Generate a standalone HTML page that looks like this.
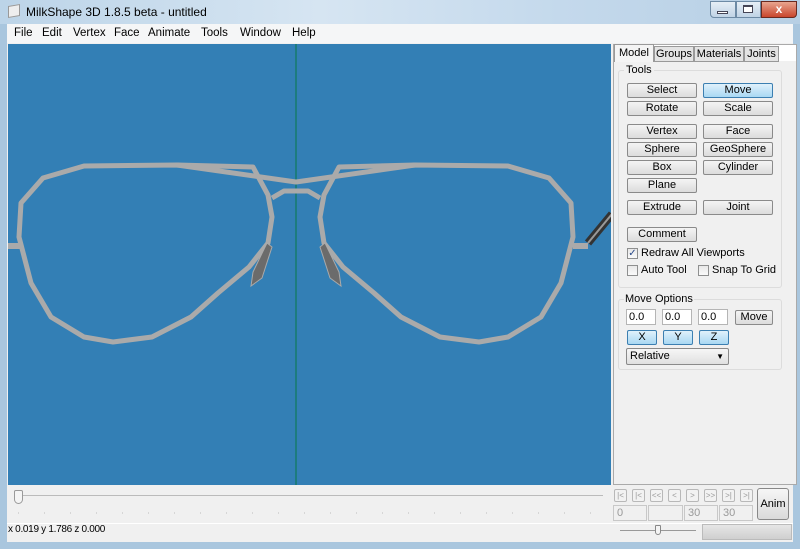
<!DOCTYPE html>
<html><head><meta charset="utf-8"><style>
*{margin:0;padding:0;box-sizing:border-box}
body{width:800px;height:549px;overflow:hidden;background:#a9c6de;font-family:"Liberation Sans",sans-serif;font-size:11px;color:#000;position:relative}
.a{position:absolute}
.btn{position:absolute;height:15px;border:1px solid #8a8a8a;border-radius:2px;background:linear-gradient(#f4f4f4,#dcdcdc);text-align:center;font-size:11px;line-height:13px}
.btn.b{background:linear-gradient(#e0f1fb,#a9d8f3);border-color:#3c7fb1}
.inp{position:absolute;height:16px;background:#fff;border:1px solid #b5b5b5;font-size:11px;line-height:14px;padding-left:2px}
.cb{position:absolute;width:11px;height:11px;border:1px solid #8e8f8f;background:linear-gradient(#e8e8e8,#fafafa)}
.nb{position:absolute;top:489px;width:13px;height:13px;border:1px solid #b8b8b8;border-radius:2px;background:#f2f2f2;font-size:8px;color:#999;text-align:center;line-height:11px}
.nf{position:absolute;top:505px;height:16px;border:1px solid #c8c8c8;background:#f0f0f0;color:#999;font-size:11px;line-height:14px;padding-left:3px}
</style></head><body>
<div class="a" style="left:0;top:0;width:800px;height:24px;background:linear-gradient(90deg,#bcd4e8,#d6e5f2 40%,#c4d9ec 70%,#b7cfe4)"></div>
<div class="a" style="left:8px;top:5px;width:12px;height:12px;background:#eee;border:1px solid #999;transform:skewY(-10deg)"></div>
<div class="a" style="left:26px;top:5px;font-size:12px">MilkShape 3D 1.8.5 beta - untitled</div>
<div class="a" style="left:710px;top:1px;width:26px;height:17px;border:1px solid #6d8aa5;border-radius:0 0 0 4px;background:linear-gradient(#e5eef6,#c0d3e5)"></div>
<div class="a" style="left:717px;top:11px;width:11px;height:3px;background:#fff;border:1px solid #445"></div>
<div class="a" style="left:736px;top:1px;width:25px;height:17px;border:1px solid #6d8aa5;background:linear-gradient(#e5eef6,#c0d3e5)"></div>
<div class="a" style="left:743px;top:5px;width:10px;height:8px;border:1px solid #445;border-top-width:2px;background:#fff"></div>
<div class="a" style="left:761px;top:1px;width:36px;height:17px;border:1px solid #6a2a20;border-radius:0 0 4px 0;background:linear-gradient(#e8a58f,#c9462d);color:#fff;font-weight:bold;text-align:center;line-height:15px;font-size:12px">x</div>
<div class="a" style="left:7px;top:24px;width:786px;height:518px;background:#f0f0f0"></div>
<div class="a" style="left:7px;top:24px;width:786px;height:19px;background:#f5f6f7;font-size:11.5px;line-height:19px">
<span class="a" style="left:7px">File</span><span class="a" style="left:35px">Edit</span><span class="a" style="left:66px">Vertex</span><span class="a" style="left:107px">Face</span><span class="a" style="left:141px">Animate</span><span class="a" style="left:194px">Tools</span><span class="a" style="left:233px">Window</span><span class="a" style="left:285px">Help</span></div>
<div class="a" style="left:8px;top:44px;width:603px;height:441px;background:#337fb5;overflow:hidden">
<svg width="603" height="441" viewBox="8 44 603 441" style="position:absolute;left:0;top:0">
<line x1="296" y1="44" x2="296" y2="485" stroke="#0f7a5a" stroke-width="1.2"/>
<g fill="none" stroke="#aaaaaa" stroke-width="5" stroke-linejoin="round">
<polygon points="84,166 177,165 253,167 268,195 272,217 268,243 249,267 218,293 191,317 152,337 113,342 84,337 51,317 31,283 19,237 21,203 43,178"/>
<polygon points="508,166 415,165 339,167 324,195 320,217 324,243 343,267 374,293 401,317 440,337 479,342 508,337 541,317 561,283 573,237 571,203 549,178"/>
<polyline points="177,165 296,182 415,165"/>
<polyline points="272,198 284,191 308,191 320,198"/>
<line x1="8" y1="246" x2="20" y2="246" stroke-width="6"/>
<line x1="573" y1="246" x2="588" y2="246" stroke-width="6"/>
</g>
<g fill="#6b6b6b" stroke="#aaa" stroke-width="1">
<polygon points="267,243 272,247 262,278 251,286 253,272"/>
<polygon points="325,243 320,247 330,278 341,286 339,272"/>
</g>
<line x1="588" y1="243" x2="612" y2="214" stroke="#333" stroke-width="8"/>
<line x1="588" y1="243" x2="612" y2="214" stroke="#999" stroke-width="2"/>
</svg></div>
<div class="a" style="left:613px;top:44px;width:184px;height:441px;background:#fff;border:1px solid #aaa"></div>
<div class="a" style="left:614px;top:61px;width:182px;height:423px;background:#f0f0f0"></div>
<div class="a" style="left:614px;top:44px;width:40px;height:18px;background:#f4f4f4;border:1px solid #999;border-bottom:none;text-align:center;line-height:16px">Model</div>
<div class="a" style="left:654px;top:46px;width:40px;height:16px;background:#e4e4e4;border:1px solid #999;text-align:center;line-height:14px">Groups</div>
<div class="a" style="left:694px;top:46px;width:50px;height:16px;background:#e4e4e4;border:1px solid #999;text-align:center;line-height:14px">Materials</div>
<div class="a" style="left:744px;top:46px;width:35px;height:16px;background:#e4e4e4;border:1px solid #999;text-align:center;line-height:14px">Joints</div>
<div class="a" style="left:618px;top:70px;width:164px;height:218px;border:1px solid #dcdcdc;border-radius:3px"></div>
<div class="a" style="left:624px;top:64px;background:#f0f0f0;padding:0 2px">Tools</div>
<div class="btn" style="left:627px;top:83px;width:70px">Select</div>
<div class="btn b" style="left:703px;top:83px;width:70px">Move</div>
<div class="btn" style="left:627px;top:101px;width:70px">Rotate</div>
<div class="btn" style="left:703px;top:101px;width:70px">Scale</div>
<div class="btn" style="left:627px;top:124px;width:70px">Vertex</div>
<div class="btn" style="left:703px;top:124px;width:70px">Face</div>
<div class="btn" style="left:627px;top:142px;width:70px">Sphere</div>
<div class="btn" style="left:703px;top:142px;width:70px">GeoSphere</div>
<div class="btn" style="left:627px;top:160px;width:70px">Box</div>
<div class="btn" style="left:703px;top:160px;width:70px">Cylinder</div>
<div class="btn" style="left:627px;top:178px;width:70px">Plane</div>
<div class="btn" style="left:627px;top:200px;width:70px">Extrude</div>
<div class="btn" style="left:703px;top:200px;width:70px">Joint</div>
<div class="btn" style="left:627px;top:227px;width:70px">Comment</div>
<div class="cb" style="left:627px;top:248px;font-size:10px;line-height:9px;color:#2a4a8a;text-align:center">✓</div>
<div class="a" style="left:641px;top:247px">Redraw All Viewports</div>
<div class="cb" style="left:627px;top:265px"></div><div class="a" style="left:641px;top:264px">Auto Tool</div>
<div class="cb" style="left:698px;top:265px"></div><div class="a" style="left:712px;top:264px">Snap To Grid</div>
<div class="a" style="left:618px;top:299px;width:164px;height:71px;border:1px solid #dcdcdc;border-radius:3px"></div>
<div class="a" style="left:624px;top:293px;background:#f0f0f0;padding:0 1px">Move Options</div>
<div class="inp" style="left:626px;top:309px;width:30px">0.0</div>
<div class="inp" style="left:662px;top:309px;width:30px">0.0</div>
<div class="inp" style="left:698px;top:309px;width:30px">0.0</div>
<div class="btn" style="left:735px;top:310px;width:38px">Move</div>
<div class="btn b" style="left:627px;top:330px;width:30px">X</div>
<div class="btn b" style="left:663px;top:330px;width:30px">Y</div>
<div class="btn b" style="left:699px;top:330px;width:30px">Z</div>
<div class="a" style="left:626px;top:348px;width:103px;height:17px;border:1px solid #8a8a8a;border-radius:2px;background:linear-gradient(#f6f6f6,#e0e0e0);line-height:15px;padding-left:3px">Relative<span class="a" style="right:4px;top:0;font-size:8px">▼</span></div>
<div class="a" style="left:18px;top:495px;width:585px;height:1px;background:#bbb"></div>
<div class="a" style="left:14px;top:490px;width:9px;height:14px;border:1px solid #999;border-radius:2px 2px 5px 5px;background:#f4f4f4"></div>
<svg class="a" style="left:18px;top:511px" width="585" height="4"><line x1="0" y1="2" x2="585" y2="2" stroke="#bbb" stroke-dasharray="1 25"/></svg>
<div class="a" style="left:7px;top:523px;width:786px;height:1px;background:#fff"></div>
<div class="a" style="left:8px;top:524px;font-size:10px;letter-spacing:-0.3px">x 0.019 y 1.786 z 0.000</div>
<div class="nb" style="left:614px">|&lt;</div><div class="nb" style="left:632px">|&lt;</div><div class="nb" style="left:650px">&lt;&lt;</div><div class="nb" style="left:668px">&lt;</div><div class="nb" style="left:686px">&gt;</div><div class="nb" style="left:704px">&gt;&gt;</div><div class="nb" style="left:722px">&gt;|</div><div class="nb" style="left:740px">&gt;|</div>
<div class="nf" style="left:613px;width:34px">0</div><div class="nf" style="left:648px;width:35px"></div><div class="nf" style="left:684px;width:34px">30</div><div class="nf" style="left:719px;width:34px">30</div>
<div class="a" style="left:757px;top:488px;width:32px;height:32px;border:1px solid #888;border-radius:3px;background:linear-gradient(#f6f6f6,#dadada);text-align:center;line-height:30px;font-size:11px">Anim</div>
<div class="a" style="left:620px;top:530px;width:76px;height:1px;background:#999"></div>
<div class="a" style="left:655px;top:525px;width:6px;height:10px;border:1px solid #888;border-radius:1px 1px 3px 3px;background:#f4f4f4"></div>
<div class="a" style="left:702px;top:524px;width:90px;height:16px;border:1px solid #bbb;background:linear-gradient(#e6e6e6,#cfcfcf)"></div>
</body></html>
